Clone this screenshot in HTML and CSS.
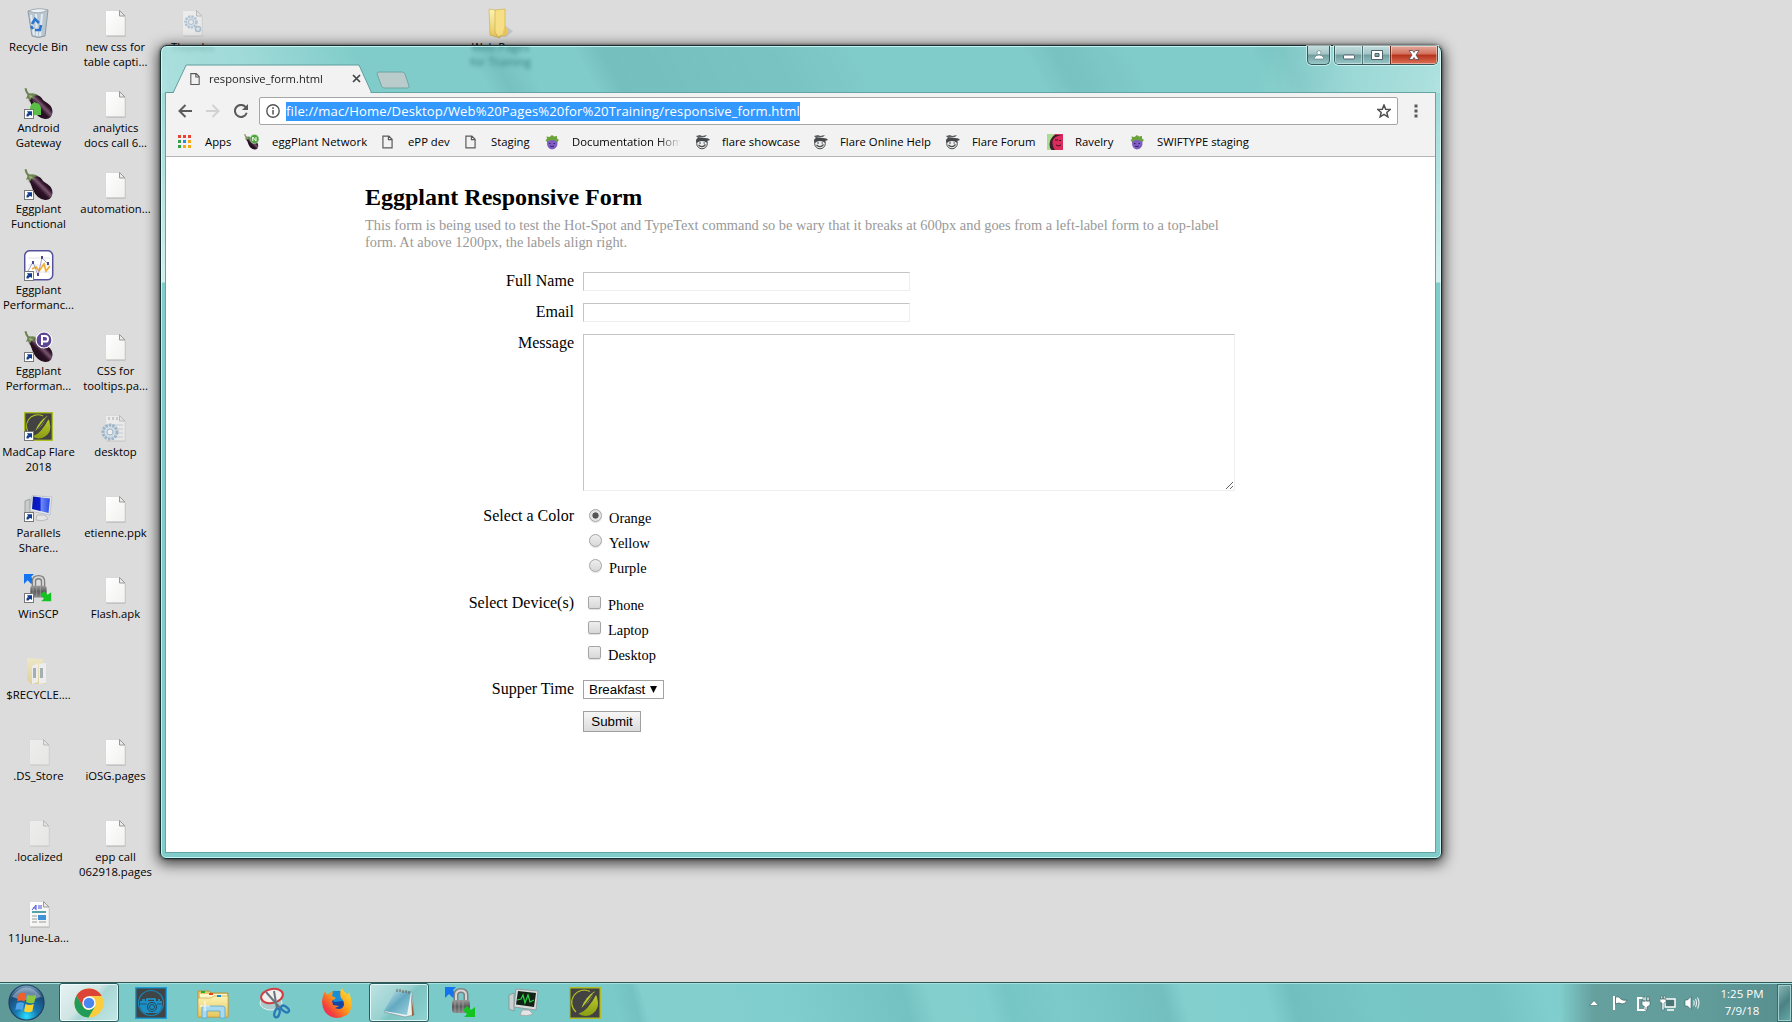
FILE: index.html
```
<!DOCTYPE html>
<html lang="en">
<head>
<meta charset="utf-8">
<title>responsive_form.html</title>
<link rel="stylesheet" href="styles.css">
</head>
<body>
<svg class="defs" width="0" height="0" aria-hidden="true">
  <defs>
    <linearGradient id="paper" x1="0" y1="0" x2="1" y2="1"><stop offset="0" stop-color="#fff"/><stop offset="1" stop-color="#f1f1ef"/></linearGradient>
    <linearGradient id="aub" x1="0" y1="1" x2="1" y2="0"><stop offset="0" stop-color="#12060f"/><stop offset=".45" stop-color="#2c1226"/><stop offset=".56" stop-color="#7a5570"/><stop offset=".66" stop-color="#2c1226"/><stop offset="1" stop-color="#12060f"/></linearGradient>
    <linearGradient id="leaf" x1="0" y1="0" x2="0" y2="1"><stop offset="0" stop-color="#b9cc2b"/><stop offset="1" stop-color="#8a9c12"/></linearGradient>
    <linearGradient id="fold" x1="0" y1="0" x2="0" y2="1"><stop offset="0" stop-color="#fdf3b4"/><stop offset="1" stop-color="#e6c65c"/></linearGradient>
    <linearGradient id="lock" x1="0" y1="0" x2="0" y2="1"><stop offset="0" stop-color="#9a9a9a"/><stop offset=".5" stop-color="#5b5b5b"/><stop offset="1" stop-color="#888"/></linearGradient>
    <linearGradient id="screen" x1="0" y1="0" x2="1" y2="0"><stop offset="0" stop-color="#0818a8"/><stop offset=".45" stop-color="#0a1cd8"/><stop offset=".5" stop-color="#6f8cf5"/><stop offset="1" stop-color="#2747e6"/></linearGradient>
    <radialGradient id="orb" cx=".5" cy=".9" r=".9"><stop offset="0" stop-color="#2be0ff"/><stop offset=".35" stop-color="#1878b0"/><stop offset=".75" stop-color="#1b4a78"/><stop offset="1" stop-color="#7fa6c4"/></radialGradient>
    <linearGradient id="fox" x1="1" y1="0" x2="0" y2="1"><stop offset="0" stop-color="#ffee3c"/><stop offset=".45" stop-color="#ff9a18"/><stop offset=".75" stop-color="#f4403c"/><stop offset="1" stop-color="#e31587"/></linearGradient>
    <linearGradient id="note" x1="0" y1="0" x2="1" y2="1"><stop offset="0" stop-color="#d5eef6"/><stop offset=".5" stop-color="#63a9c0"/><stop offset="1" stop-color="#9fd3e2"/></linearGradient>

    <symbol id="i-file" viewBox="0 0 32 32"><path d="M6.500 4.500H20.500L25.500 10V29.500H6.500Z" fill="#a9a9a9"/><path d="M5.500 3.500H19.500L25 9V28.500H5.500Z" fill="url(#paper)" stroke="#d4d4d4" stroke-width=".8"/><path d="M19.500 3.500V9H25Z" fill="#e9e9e9" stroke="#999"/></symbol>
    <symbol id="i-short" viewBox="0 0 32 32"><rect x=".5" y="21.500" width="9" height="9" fill="#fff" stroke="#777"/><path d="M2.500 28.500V27Q2.500 25 5 25H4L3 23.300H8V28L6.500 27Q4.500 27 4.500 28.500Z" fill="#123c8c"/></symbol>
    <symbol id="i-egg" viewBox="0 0 32 32"><path d="M4 9Q8 5 13 7Q17 8 19 12C22 15 28.500 16 28.500 24Q28 31.500 21 31Q13 30 9 21Q7 15 4 9Z" fill="url(#aub)"/><path d="M.5 .5L2.500 0Q3.500 5 6 5.500Q10 4.500 14 7L10 8L11 11L7.500 10L5 14L4.500 10L2 11L3.500 7Q1 4 .5 .5Z" fill="#6d8352"/><path d="M5 7L9 8L6 10Z" fill="#a5b67a"/></symbol>
    <symbol id="i-docs" viewBox="0 0 32 32"><use href="#i-file"/><g opacity=".9"><circle cx="14" cy="15" r="5.500" fill="#cfe1ef" stroke="#79a2c4" stroke-width="2.500" stroke-dasharray="2.200 1"/><circle cx="14" cy="15" r="2.500" fill="#f4f8fb" stroke="#6c96ba"/><circle cx="21" cy="22" r="2.500" fill="#dae8f1" stroke="#6c96ba" stroke-width="1.500"/></g></symbol>
    <symbol id="i-flare" viewBox="0 0 32 32"><rect x=".75" y=".75" width="30.500" height="30.500" fill="#424242" stroke="#aebf25" stroke-width="1.500"/><path d="M28.500 13A12.500 12.500 0 0 1 9 26.500Q15 25 19 20Q24 14 27 8Q28.500 10 28.500 13Z" fill="url(#leaf)"/><path d="M7 25A12.500 12.500 0 0 1 21 4.500" fill="none" stroke="#aebf25" stroke-width="1.200"/><path d="M26 4Q16 10 12.500 21Q20 17 26 4Z" fill="#bacb30"/><path d="M25 6L9 27" stroke="#424242" stroke-width="1.200"/></symbol>
    <symbol id="i-lock" viewBox="0 0 32 32"><path d="M0 0H11L8 3L11 8L8 11L4 7L0 11Z" fill="#1473ee"/><path d="M11 15V8Q11 3.500 16 3.500T21 8V15" fill="none" stroke="#808080" stroke-width="5"/><path d="M11 15V8Q11 3.500 16 3.500T21 8V15" fill="none" stroke="#d6d6d6" stroke-width="2"/><rect x="7" y="13" width="18" height="13" rx="3" fill="url(#lock)"/><path d="M10 14V26M14 14V26M18 14V26" stroke="#aaa" stroke-width=".7"/><path d="M30 30H19L22 27L18 23L22 19L26 23L30 20Z" fill="#13c31f"/></symbol>
    <symbol id="i-page" viewBox="0 0 12 15"><path d="M1 1H7.500L11 4.500V14H1ZM7 1V5H11" fill="none" stroke="#5a5a5a" stroke-width="1.300"/></symbol>
    <symbol id="i-purple" viewBox="0 0 16 16"><path d="M3 7Q8 4 13.500 7Q14 15 8 15.500Q2.500 15 3 7Z" fill="#7f5cc4"/><path d="M3 8L1.500 6L3 5L2.500 2.500L5.500 3L8 1L10 2.500L13 2L13 4.500L15 6L13 8L11 6.500L8 6L5 6.500Z" fill="#6ba23a"/><path d="M5 9.500H6.500M9.500 9.500H11M6 12Q8 13.500 10 12" stroke="#38246e" fill="none"/></symbol>
    <symbol id="i-face" viewBox="0 0 16 16"><circle cx="8" cy="9.500" r="5.300" fill="#eee" stroke="#484b4d"/><path d="M2.500 9Q1 5 4 4L11 4Q15 4 16 6L13 7L13.500 9Q8 5 2.500 9Z" fill="#44484a"/><path d="M2 2L6 1L8 2L13 1L11 3L4 4Z" fill="#5a5d5f"/><path d="M5 9H7M9.500 9H11M4.500 11Q8 14.500 11.500 10.500" stroke="#44484a" stroke-width="1.200" fill="none"/></symbol>
  </defs>
</svg>

<main class="desktop">
  <div class="item c1 r1"><svg class="ico bin" viewBox="0 0 32 32"><path d="M6 4L26 3L23 29Q16 32 10 29Z" fill="#b9c6d0" stroke="#8e9aa3"/><path d="M6 4Q16 0 26 3Q17 8 6 4Z" fill="#eef3f6" stroke="#a3adb4"/><path d="M9 8L12 28M14 7L15 29M20 7L18 29" stroke="#e4ecf2" stroke-width="2"/><path d="M10 17L13 12L17 16M19 18L18 23L13 23M11 22L9 19" fill="none" stroke="#2a76cf" stroke-width="2.600"/></svg><span>Recycle Bin</span></div>
  <div class="item c1 r2"><svg class="ico" viewBox="0 0 32 32"><use href="#i-egg"/><path d="M6 20Q7 15 10 15L9 13L12 15Q16 15 17 20V27H6Z" fill="#5bbf45"/><use href="#i-short"/></svg><span>Android<br>Gateway</span></div>
  <div class="item c1 r3"><svg class="ico" viewBox="0 0 32 32"><use href="#i-egg"/><use href="#i-short"/></svg><span>Eggplant<br>Functional</span></div>
  <div class="item c1 r4"><svg class="ico" viewBox="0 0 32 32"><rect x=".7" y=".7" width="28" height="29" rx="5" fill="#fff" stroke="#55509a" stroke-width="1.500"/><path d="M4 8H26M4 15H26M4 22H26" stroke="#e4e4ec"/><path d="M8 19L12 17L15 21L20 14L22 21L26 16" fill="none" stroke="#f3ae36" stroke-width="1.800"/><path d="M4 21L9 12L14 25L18 8L24 14" fill="none" stroke="#8b8abf" stroke-width=".8"/><path d="M8 11h2v3h-2zM13 23h2v3h-2zM17 6h2v3h-2zM23 12h2v3h-2z" fill="#4b4795"/><use href="#i-short"/></svg><span>Eggplant<br>Performanc...</span></div>
  <div class="item c1 r5"><svg class="ico" viewBox="0 0 32 32"><use href="#i-egg"/><circle cx="20" cy="9" r="8" fill="#5b4594" stroke="#fff" stroke-width="1.200"/><path d="M18 14V5H21Q24 5 24 8T21 10.500H18" fill="none" stroke="#fff" stroke-width="2"/><use href="#i-short"/></svg><span>Eggplant<br>Performan...</span></div>
  <div class="item c1 r6"><svg class="ico" viewBox="0 0 32 32"><use href="#i-flare" width="29" height="29"/><use href="#i-short" y="-2"/></svg><span>MadCap Flare<br>2018</span></div>
  <div class="item c1 r7"><svg class="ico" viewBox="0 0 32 32"><path d="M1 8L6 6V24L1 23Z" fill="#c9cdc9" stroke="#9fa39f"/><path d="M13 22H21L24 26Q19 29 12 27Z" fill="#e4e4e4" stroke="#bbb"/><path d="M8 2.500L28 4L26 22L6 18Z" fill="#e4e7ea" stroke="#b3b8bc" stroke-width=".7"/><path d="M9 3.500L26 5.500L24.500 20L8 16Z" fill="url(#screen)"/><use href="#i-short" y="-2"/></svg><span>Parallels<br>Share...</span></div>
  <div class="item c1 r8"><svg class="ico" viewBox="0 0 32 32"><use href="#i-lock" width="29" height="29"/><use href="#i-short" y="-2"/></svg><span>WinSCP</span></div>
  <div class="item c1 r9 faded"><svg class="ico" viewBox="0 0 32 32"><path d="M3 3L19 4V8L22 9V29H7L3 25Z" fill="url(#fold)"/><path d="M8 11L14 8V27L8 29ZM15 9L22 8V28L15 29Z" fill="#fff"/><path d="M9 13H12V23H9ZM16 13H19V23H16Z" fill="#69848b"/></svg><span>$RECYCLE....</span></div>
  <div class="item c1 r10 faded"><svg class="ico"><use href="#i-file"/></svg><span>.DS_Store</span></div>
  <div class="item c1 r11 faded"><svg class="ico"><use href="#i-file"/></svg><span>.localized</span></div>
  <div class="item c1 r12"><svg class="ico" viewBox="0 0 32 32"><use href="#i-file"/><path d="M8 12L12 7V12M9 10H12M14 8H18M14 10H18" stroke="#4a50df" fill="none"/><path d="M8 14H22" stroke="#17868c" stroke-width="1.500"/><path d="M8 18H13M8 21H13M8 24H13M15 24H22" stroke="#999"/><rect x="14" y="17" width="8" height="5" fill="#3f91d8"/></svg><span>11June-La...</span></div>

  <div class="item c2 r1"><svg class="ico"><use href="#i-file"/></svg><span>new css for<br>table capti...</span></div>
  <div class="item c2 r2"><svg class="ico"><use href="#i-file"/></svg><span>analytics<br>docs call 6...</span></div>
  <div class="item c2 r3"><svg class="ico"><use href="#i-file"/></svg><span>automation...</span></div>
  <div class="item c2 r5"><svg class="ico"><use href="#i-file"/></svg><span>CSS for<br>tooltips.pa...</span></div>
  <div class="item c2 r6 faded"><svg class="ico" viewBox="0 0 32 32"><use href="#i-file"/><path d="M9 5V8M13 5V8M17 5V8" stroke="#777"/><path d="M8 13H23M8 17H23M8 21H23M8 25H23" stroke="#a9bccb"/><circle cx="10" cy="20" r="7" fill="#c8dcec" stroke="#5f8fb8" stroke-width="3" stroke-dasharray="2.500 1"/><circle cx="10" cy="20" r="3" fill="#fff" stroke="#5f8fb8"/></svg><span>desktop</span></div>
  <div class="item c2 r7"><svg class="ico"><use href="#i-file"/></svg><span>etienne.ppk</span></div>
  <div class="item c2 r8"><svg class="ico"><use href="#i-file"/></svg><span>Flash.apk</span></div>
  <div class="item c2 r10"><svg class="ico"><use href="#i-file"/></svg><span>iOSG.pages</span></div>
  <div class="item c2 r11"><svg class="ico"><use href="#i-file"/></svg><span>epp call<br>062918.pages</span></div>
  <div class="item c3 r1 faded"><svg class="ico"><use href="#i-docs"/></svg><span>Thumbs</span></div>
  <div class="item c7 r1"><svg class="ico" viewBox="0 0 32 32"><path d="M19 18L28 24L21 30H9Z" fill="#999" opacity=".35"/><path d="M4 2L15 4V31L5 28Z" fill="url(#fold)" stroke="#cfa93c" stroke-width=".6"/><path d="M10 3L20 2V27L13 30L10 25Z" fill="#f6df84" stroke="#cfab42" stroke-width=".6"/><path d="M19 21H23V27L17 30Z" fill="#e9c75b"/></svg><span>Web Pages<br>for Training</span></div>
</main>

<section class="window">
  <header class="titlebar">
    <div class="tab">
      <svg class="tab-shape" viewBox="0 0 208 29" aria-hidden="true"><path d="M0 28.500H6.500L20 1H200L213 28.500" transform="scale(.96 1)" fill="#f2f2f2" stroke="#5d9c9b"/><path d="M7 29H203" stroke="#f2f2f2" stroke-width="2"/></svg>
      <svg class="tab-page"><use href="#i-page"/></svg>
      <span class="tab-name">responsive_form.html</span>
      <svg class="tab-close" viewBox="0 0 9 9"><path d="M1 1L8 8M8 1L1 8" stroke="#444" stroke-width="1.700"/></svg>
    </div>
    <svg class="newtab" viewBox="0 0 34 18"><path d="M3 1H26Q28 1 29 3L33 15Q33.500 17 31.500 17H8Q6.500 17 5.500 15L1 3Q.8 1 3 1Z" fill="#b9cbcb" stroke="#6fa3a2"/></svg>
    <div class="controls">
      <div class="ctl user"><svg viewBox="0 0 10 10" width="10" height="10"><circle cx="5" cy="2.700" r="2" fill="#fff" stroke="#58787a" stroke-width=".6"/><path d="M.5 9V7.500Q2 5 5 5T9.500 7.500V9Z" fill="#fff" stroke="#58787a" stroke-width=".6"/></svg></div>
      <div class="group">
        <div class="ctl min"><svg viewBox="0 0 12 10" width="12" height="10"><rect x=".5" y="5" width="11" height="4" rx=".5" fill="#fff" stroke="#51616a"/></svg></div>
        <div class="ctl max"><svg viewBox="0 0 12 10" width="12" height="10"><path d="M.5 .5H11.500V9.500H.5ZM4 3.500V6.500H8V3.500Z" fill="#fff" fill-rule="evenodd" stroke="#51616a"/></svg></div>
        <div class="ctl close"><svg viewBox="0 0 12 10" width="12" height="10"><path d="M1 .5H4.500L6 2.500L7.500 .5H11L8 5L11 9.500H7.500L6 7.500L4.500 9.500H1L4 5Z" fill="#fff" stroke="#5b4654" stroke-width=".8"/></svg></div>
      </div>
    </div>
  </header>

  <div class="client">
    <div class="toolbar">
      <svg class="nav" viewBox="0 0 14 14"><path d="M14 7H1.500M7.500 1L1.500 7L7.500 13" fill="none" stroke="#5a5a5a" stroke-width="2"/></svg>
      <svg class="nav" viewBox="0 0 14 14"><path d="M0 7H12.500M6.500 1L12.500 7L6.500 13" fill="none" stroke="#d2d2d2" stroke-width="2"/></svg>
      <svg class="nav" viewBox="0 0 14 14"><path d="M11.700 3.200A6 6 0 1 0 12.700 8.700" fill="none" stroke="#5a5a5a" stroke-width="2"/><path d="M14 0V6H8Z" fill="#5a5a5a"/></svg>
      <div class="omnibox">
        <svg class="info" viewBox="0 0 14 14"><circle cx="7" cy="7" r="6.200" fill="none" stroke="#555" stroke-width="1.400"/><path d="M7 6V10.500M7 3.300V5" stroke="#555" stroke-width="1.500"/></svg>
        <span class="url">file://mac/Home/Desktop/Web%20Pages%20for%20Training/responsive_form.html</span>
        <svg class="star" viewBox="0 0 14 14"><path d="M7 1L8.700 5.200L13.200 5.500L9.800 8.400L10.900 12.900L7 10.400L3.100 12.900L4.200 8.400L.8 5.500L5.300 5.200Z" fill="none" stroke="#505050" stroke-width="1.500"/></svg>
      </div>
      <svg class="dots" viewBox="0 0 4 14"><path d="M.5 .5h3v3h-3zM.5 5.500h3v3h-3zM.5 10.500h3v3h-3z" fill="#5a5a5a"/></svg>
    </div>
    <nav class="bookmarks">
      <div><svg viewBox="0 0 16 16"><path d="M1 1h3v3h-3zM6 1h3v3h-3zM11 1h3v3h-3z" fill="#ea4335"/><path d="M1 6h3v3h-3z" fill="#34a048"/><path d="M6 6h3v3h-3z" fill="#2d86e8"/><path d="M11 6h3v3h-3zM6 11h3v3h-3zM11 11h3v3h-3z" fill="#f5ab10"/><path d="M1 11h3v3h-3z" fill="#34a048"/></svg><span>Apps</span></div>
      <div><svg viewBox="0 0 32 32"><use href="#i-egg"/><circle cx="21" cy="10" r="9" fill="#4aa43b" stroke="#dceedd"/><path d="M17.500 14V6L24 14V6" fill="none" stroke="#fff" stroke-width="2"/></svg><span class="wide">eggPlant Network</span></div>
      <div class="plain"><svg><use href="#i-page"/></svg><span>ePP dev</span></div>
      <div class="plain"><svg><use href="#i-page"/></svg><span>Staging</span></div>
      <div class="docs"><svg><use href="#i-purple"/></svg><span class="cut">Documentation Home</span></div>
      <div><svg><use href="#i-face"/></svg><span>flare showcase</span></div>
      <div><svg><use href="#i-face"/></svg><span>Flare Online Help</span></div>
      <div><svg><use href="#i-face"/></svg><span>Flare Forum</span></div>
      <div><svg viewBox="0 0 16 16"><rect width="16" height="16" fill="#dd2a5c"/><path d="M0 0H8Q3 4 4 16H0Z" fill="#a8dd92"/><path d="M3 14Q1 5 8 1H15Q7 2 5.500 7Q5 12 8 16H5Z" fill="#33222b"/><path d="M8 6H11M12 6.500H14M9 11Q11 13 14 11" stroke="#3a1524" fill="none"/></svg><span>Ravelry</span></div>
      <div class="docs"><svg><use href="#i-purple"/></svg><span>SWIFTYPE staging</span></div>
    </nav>

    <article class="page">
      <div class="content">
        <h1>Eggplant Responsive Form</h1>
        <p>This form is being used to test the Hot-Spot and TypeText command so be wary that it breaks at 600px and goes from a left-label form to a top-label form. At above 1200px, the labels align right.</p>
        <form>
          <label class="name" for="full">Full Name</label><input class="field" id="full" type="text">
          <label class="name" for="mail">Email</label><input class="field" id="mail" type="text">
          <label class="name" for="msg">Message</label><textarea id="msg"></textarea>
          <span class="name group-name">Select a Color</span>
          <div class="options radios">
            <label><input type="radio" name="color" checked>Orange</label>
            <label><input type="radio" name="color">Yellow</label>
            <label><input type="radio" name="color">Purple</label>
          </div>
          <span class="name group-name">Select Device(s)</span>
          <div class="options checks">
            <label><input type="checkbox">Phone</label>
            <label><input type="checkbox">Laptop</label>
            <label><input type="checkbox">Desktop</label>
          </div>
          <span class="name">Supper Time</span>
          <div class="select"><span>Breakfast</span><svg viewBox="0 0 7 7"><path d="M0 0H7L3.500 7Z"/></svg></div>
          <button type="button">Submit</button>
        </form>
      </div>
    </article>
  </div>
</section>

<footer class="taskbar">
  <div class="start"><svg viewBox="0 0 38 38"><circle cx="19" cy="19" r="18" fill="url(#orb)" stroke="#1d4060" stroke-width="1.200"/><path d="M4 13Q19 -6 34 13Q19 20 4 13Z" fill="#fff" opacity=".35"/><path d="M11 10Q15 8 18.500 10L17 18Q13 16 9.500 18Z" fill="#f0602a"/><path d="M20 11Q24 13 29 11L27 19Q23 21 18.500 18.500Z" fill="#8dc63f"/><path d="M9 19.500Q13 18 16.500 19.500L15 27Q11 25 7.500 27Z" fill="#4fa3ea"/><path d="M18 20.500Q22 22.500 26.500 20.500L25 28Q21 30 16.500 28Z" fill="#fcd22f"/></svg></div>
  <div class="task active"><svg viewBox="0 0 32 32"><circle cx="16" cy="16" r="14.500" fill="#fbcc3b"/><path d="M16 9H28.700A14.500 14.500 0 0 0 3.400 8.700L10 20L16 16Z" fill="#dc4437"/><path d="M3.400 8.700A14.500 14.500 0 0 0 15.500 30.500L22 19.500L16 23Q12 23 10 19.500Z" fill="#1f9d58"/><circle cx="16" cy="16" r="6.700" fill="#fff"/><circle cx="16" cy="16" r="5.300" fill="#4a86f0"/></svg></div>
  <div class="task"><svg viewBox="0 0 32 32"><rect x=".7" y=".7" width="30.600" height="30.600" fill="#3f4446" stroke="#1c9fd8" stroke-width="1.400"/><circle cx="16" cy="16" r="12.500" fill="none" stroke="#1786b8" stroke-width="1.200"/><path d="M5 14H27V20Q25 25 22 26H10Q7 25 5 20Z" fill="#1c8fc6"/><path d="M12 14V12H20V14M7 13H10M23 13H25" stroke="#1c9fd8" stroke-width="1.600" fill="none"/><circle cx="17" cy="20" r="4.500" fill="#1c8fc6" stroke="#224d60" stroke-width="1.200"/><circle cx="17" cy="20" r="2.500" fill="none" stroke="#224d60"/><path d="M5 17H12M22 17H27" stroke="#224d60" stroke-width=".8"/></svg></div>
  <div class="task"><svg viewBox="0 0 32 32"><path d="M1 4H12L14 6H31V30H1Z" fill="#e8c868" stroke="#b9963d"/><path d="M3 7H30V28H3Z" fill="#fff6c9"/><path d="M1 11H14L17 9H31V30H1Z" fill="url(#fold)" stroke="#c6a348" stroke-width=".7"/><path d="M4 4H8V6H4Z" fill="#29ab35"/><path d="M12 6H16V8H12Z" fill="#dc4726"/><path d="M20 8H24V10H20Z" fill="#1688d8"/><path d="M5 31V21Q5 19 7 19H25Q28 19 28 21V31H23V24H10V31Z" fill="#a7d9ef" stroke="#5ea6ca" stroke-width=".8"/><path d="M8 14V24M3 19H13" stroke="#fff"/></svg></div>
  <div class="task"><svg viewBox="0 0 32 32"><ellipse cx="12" cy="16" rx="11" ry="7" fill="#a8cbcc" stroke="#e6f0f0"/><ellipse cx="13" cy="9" rx="11" ry="7" transform="rotate(-12 13 9)" fill="#f3efef" stroke="#cf3f42" stroke-width="2"/><path d="M7 5L22 22M15 4L18 22" stroke="#68757b" stroke-width="2"/><ellipse cx="18" cy="26" rx="2.500" ry="4.500" fill="none" stroke="#2979b6" stroke-width="2.300" transform="rotate(15 18 26)"/><ellipse cx="26" cy="22" rx="4.500" ry="2.500" fill="none" stroke="#2979b6" stroke-width="2.300" transform="rotate(35 26 22)"/></svg></div>
  <div class="task"><svg viewBox="0 0 32 32"><circle cx="16" cy="16" r="12" fill="#1746a8"/><path d="M9 6Q15 1 22 7L22 14L13 15Z" fill="#198ed8"/><path d="M21 1Q22 4 27 8L28 5Q34 21 26 28Q13 35 4 25Q-2 15 4 4L6 8L12 4L11 9L15 11L11 14L12 18L18 19Q14 21 14 21Q21 24 23 18Q23 13 20 11Q18 5 21 1Z" fill="url(#fox)"/></svg></div>
  <div class="task open"><svg viewBox="0 0 32 32"><path d="M14 5L29 5L31 28L22 30L1 25Z" fill="#eaf1ef" stroke="#78969b" stroke-width=".7"/><path d="M13 3L28 5L24 28L1 24Z" fill="url(#note)"/><path d="M14 2V5M17 2V5M20 3V6M23 3V6M26 4V7" stroke="#735e4a"/><path d="M28 6L31 28L29 29Z" fill="#99603c"/></svg></div>
  <div class="task"><svg><use href="#i-lock"/></svg></div>
  <div class="task"><svg viewBox="0 0 32 32"><path d="M2 8L7 6V24L2 22Z" fill="#ccd0cf" stroke="#888" stroke-width=".7"/><path d="M15 23H22L26 27Q20 30 13 28Z" fill="#e4e4e4" stroke="#999" stroke-width=".7"/><path d="M9 2L31 4L29 23L7 20Z" fill="#d9dcdc" stroke="#888" stroke-width=".7"/><path d="M11 4L29 6L27 20L9 17.500Z" fill="#102214"/><path d="M10 13L14 12L16 8L18 16L21 8L23 15L27 13" fill="none" stroke="#25d644" stroke-width="1.200"/></svg></div>
  <div class="task"><svg><use href="#i-flare"/></svg></div>
  <div class="tray">
    <svg class="t-arrow" viewBox="0 0 10 6"><path d="M.5 5.500L5 .5L9.500 5.500Z" fill="#fff" stroke="#3d6a6a" stroke-width=".6"/></svg>
    <svg class="t-ico" viewBox="0 0 16 16"><path d="M2 1V15" stroke="#fff" stroke-width="2"/><path d="M3.500 2Q7 1 9 4Q11 6 15 5Q14 9 10 9Q7 7 3.500 9Z" fill="#fff" stroke="#365b5c" stroke-width=".7"/></svg>
    <svg class="t-ico" viewBox="0 0 16 16"><path d="M2 3H9V15H2Z" fill="none" stroke="#fff" stroke-width="2"/><path d="M6 6H14V10L11 12V15H9V12L6 10ZM7 2H9V6H7ZM11 2H13V6H11Z" fill="#fff" stroke="#365b5c" stroke-width=".6"/></svg>
    <svg class="t-ico" viewBox="0 0 16 16"><path d="M5 4H15V12H5ZM7 15H14" fill="#4a7575" stroke="#fff" stroke-width="1.500"/><path d="M0 4H6V7L4 8V15H2V8L0 7ZM1 1H2.500V4H1ZM3.800 1H5.300V4H3.800Z" fill="#fff" stroke="#365b5c" stroke-width=".5"/></svg>
    <svg class="t-ico" viewBox="0 0 16 16"><path d="M1 5H3.500L7 1.500V14.500L3.500 11H1Z" fill="#fff" stroke="#365b5c" stroke-width=".6"/><path d="M9.500 5.500Q11 8 9.500 10.500M11.500 4Q13.500 8 11.500 12M13.500 2.500Q16.500 8 13.500 13.500" fill="none" stroke="#e8f3f3" stroke-width="1.100"/></svg>
    <div class="clock">1:25 PM<br>7/9/18</div>
    <div class="peek"></div>
  </div>
</footer>
</body>
</html>
```
FILE: styles.css
```
* { box-sizing: border-box; }
body {
  margin: 0;
  width: 1792px;
  height: 1022px;
  overflow: hidden;
  position: relative;
  background: #dcdcdc;
  font-family: "Open Sans", "Noto Sans", sans-serif;
  color: #000;
}
svg { display: block; flex: none; }
.defs { position: absolute; }

/* desktop icons */
.desktop {
  display: grid;
  grid-template-columns: repeat(7, 77px);
  grid-template-rows: repeat(12, 81px);
}
.item {
  display: flex;
  flex-direction: column;
  align-items: center;
  padding-top: 7px;
  font-size: 11.3px;
  line-height: 15px;
  text-align: center;
  white-space: nowrap;
}
.ico { width: 32px; height: 32px; }
.c1 .ico { margin-left: 2px; }
.c1 .bin { margin-left: -1px; }
.faded .ico { opacity: .5; }
.c1 { grid-column: 1; } .c2 { grid-column: 2; } .c3 { grid-column: 3; } .c7 { grid-column: 7; }
.r1 { grid-row: 1; } .r2 { grid-row: 2; } .r3 { grid-row: 3; } .r4 { grid-row: 4; }
.r5 { grid-row: 5; } .r6 { grid-row: 6; } .r7 { grid-row: 7; } .r8 { grid-row: 8; }
.r9 { grid-row: 9; } .r10 { grid-row: 10; } .r11 { grid-row: 11; } .r12 { grid-row: 12; }

/* browser window */
.window {
  position: absolute;
  left: 160px;
  top: 45px;
  width: 1282px;
  height: 814px;
  padding: 0 5px 5px 4px;
  border: 1px solid #16302f;
  border-radius: 7px 7px 6px 6px;
  background:
    linear-gradient(180deg, rgba(160,220,218,.5) 0, rgba(225,245,244,.85) 236px, transparent 237px) 0 0 / 6px 100% no-repeat,
    linear-gradient(180deg, rgba(160,220,218,.5) 0, rgba(225,245,244,.85) 236px, transparent 237px) 100% 0 / 6px 100% no-repeat,
    linear-gradient(62deg, rgba(205,238,236,.55) 0, rgba(205,238,236,.4) 90px, transparent 190px) 0 0 / 100% 47px no-repeat,
    linear-gradient(-75deg, rgba(205,238,236,.6) 0, rgba(205,238,236,.35) 90px, transparent 180px) 0 0 / 100% 47px no-repeat,
    linear-gradient(62deg, transparent 290px, rgba(80,150,150,.2) 310px, transparent 340px, transparent 385px, rgba(80,150,150,.25) 410px, rgba(80,150,150,.15) 560px, transparent 640px, transparent 780px, rgba(80,150,150,.18) 810px, transparent 880px, transparent 980px, rgba(80,150,150,.15) 1010px, transparent 1060px) 0 0 / 100% 47px no-repeat,
    rgba(77,195,193,.64);
  backdrop-filter: blur(2px);
  box-shadow: inset 0 0 0 1px rgba(225,255,255,.75), 0 0 3px rgba(0,0,0,.65), 0 3px 14px 2px rgba(0,0,0,.7);
}
.titlebar {
  display: flex;
  height: 46px;
  padding-top: 18px;
}
.tab {
  position: relative;
  display: flex;
  align-items: center;
  width: 208px;
  margin-left: 2px;
  padding: 0 0 0 23px;
  height: 29px;
}
.tab-shape { position: absolute; left: 0; top: 0; width: 208px; height: 29px; }
.tab-page, .tab-name, .tab-close { position: relative; }
.tab-page { width: 10px; height: 14px; }
.tab-name { flex: 1; margin-left: 9px; font-size: 11.2px; white-space: nowrap; color: #222; }
.tab-close { width: 9px; height: 9px; margin-right: 14px; }
.newtab { width: 34px; height: 18px; margin: 7px 0 0 1px; }
.controls { display: flex; gap: 4px; margin: -18px -2px 0 auto; height: 19px; }
.group { display: flex; border: 1px solid #35585a; border-top: 0; border-radius: 0 0 5px 5px; overflow: hidden; box-shadow: 0 0 0 1px rgba(235,255,255,.6); }
.ctl {
  display: flex;
  align-items: center;
  justify-content: center;
  height: 18px;
  background: linear-gradient(#c5dddd, #a2c4c5 45%, #6f9b9c 50%, #9ac9c9);
  box-shadow: inset 0 0 0 1px rgba(255,255,255,.4);
}
.user { width: 23px; height: 19px; border: 1px solid #35585a; border-top: 0; border-radius: 0 0 5px 5px; box-shadow: 0 0 0 1px rgba(235,255,255,.6); }
.min { width: 28px; border-right: 1px solid #4f7476; }
.max { width: 27px; }
.close { width: 47px; border-left: 1px solid #6b2b22; background: linear-gradient(#e3a99c, #d3705c 45%, #b5321a 50%, #dc7155); }

.client {
  height: 761px;
  border: 1px solid #64a5a4;
  background: #fff;
}
.toolbar {
  display: flex;
  align-items: center;
  height: 36px;
  padding: 0 16px 0 12px;
  background: #f2f2f2;
}
.nav { width: 14px; height: 14px; margin-right: 14px; }
.nav:nth-child(3) { margin-right: 11px; }
.omnibox {
  display: flex;
  align-items: center;
  width: 1139px;
  height: 28px;
  padding: 0 6px;
  background: #fff;
  border: 1px solid #a6a6a6;
  border-radius: 2px;
}
.info { width: 14px; height: 14px; margin-right: 6px; }
.url {
  width: 514px;
  height: 19px;
  background: #3399ff;
  color: #fff;
  font-size: 13.100px;
  letter-spacing: .12px;
  line-height: 19px;
  white-space: nowrap;
}
.star { width: 14px; height: 14px; margin-left: auto; }
.dots { width: 4px; height: 14px; margin-left: 16px; }
.bookmarks {
  display: grid;
  grid-template-columns: 67px 138px 83px 81px 148px 118px 132px 103px 84px 140px;
  height: 28px;
  padding: 0 0 2px 11px;
  align-items: center;
  background: #f2f2f2;
  border-bottom: 1px solid #b5b5b5;
  font-size: 11.3px;
}
.bookmarks > div { display: flex; align-items: center; white-space: nowrap; }
.bookmarks svg { width: 16px; height: 16px; margin-right: 12px; }
.bookmarks .plain svg { width: 11px; height: 14px; margin-right: 15px; }
.bookmarks .docs { margin-left: -2px; }
.wide { letter-spacing: .12px; }
.cut { width: 109px; overflow: hidden; -webkit-mask-image: linear-gradient(90deg, #000 85px, transparent 109px); mask-image: linear-gradient(90deg, #000 85px, transparent 109px); }

/* page */
.page { font-family: "Liberation Serif", "Times New Roman", serif; }
.content { width: 870px; margin-left: 199px; padding-top: 27px; }
h1 { margin: 0; font-size: 24px; line-height: 27px; }
p { margin: 6px 0 21px; font-size: 14.4px; line-height: 17px; color: #999; }
form {
  display: grid;
  grid-template-columns: 209px 1fr;
  column-gap: 9px;
  row-gap: 12px;
  align-items: start;
  justify-items: start;
}
.name { justify-self: end; font-size: 16px; line-height: 18px; }
.field, textarea {
  height: 19px;
  width: 327px;
  margin: 0;
  border: 1px solid #eee;
  border-top-color: #c4c4c4;
  border-left-color: #c4c4c4;
  outline: 0;
  background: #fff;
}
textarea { width: 652px; height: 157px; resize: both; display: block; }
.group-name { margin-top: 4px; }
.options { font-size: 14.4px; width: 200px; }
.radios { margin-top: 1px; margin-bottom: -1px; }
.checks { margin-top: 1px; margin-bottom: 2px; }
.options label { display: flex; align-items: center; height: 25px; padding-top: 3px; }
.options input {
  appearance: none;
  width: 13px;
  height: 13px;
  margin: -5px 7px 0 5px;
  border: 1px solid #a5a5a5;
  border-radius: 2px;
  background: linear-gradient(#eee, #d8d8d8);
  box-shadow: 0 1px 1px rgba(0,0,0,.12);
}
.radios input { border-radius: 50%; margin-left: 6px; }
.radios input:checked { background: radial-gradient(circle, #555 0 2.800px, #e4e4e4 3.400px); }
.select {
  display: flex;
  align-items: center;
  justify-content: space-between;
  width: 81px;
  height: 19px;
  padding: 0 6px 0 5px;
  border: 1px solid #a3a3a3;
  font: 13.333px/17px "Liberation Sans", Arial, sans-serif;
}
.select svg { width: 7px; height: 7px; }
button {
  grid-column: 2;
  width: 58px;
  height: 21px;
  padding: 0;
  border: 1px solid #a0a0a0;
  background: linear-gradient(#f6f6f6, #dcdcdc);
  font: 13.333px "Liberation Sans", Arial, sans-serif;
  color: #000;
}

/* taskbar */
.taskbar {
  position: absolute;
  left: 0;
  top: 982px;
  display: flex;
  width: 1792px;
  height: 40px;
  border-top: 1px solid #2f5a5a;
  box-shadow: inset 0 1px #a8e0df;
  background:
    linear-gradient(90deg, #5f9998 0, #5f9998 58px, transparent 66px),
    linear-gradient(75deg, #7acac9 600px, #74c2c2 618px, #83cfce 628px, #80cecd 760px, #74c2c1 880px, #83cfce 905px, #80cecd 960px, #76c6c5 980px, #7ccbca 1030px, #73bfbf 1130px, #82cfce 1150px, #80cecd 1230px, #72bfbf 1255px, #77c7c6 1330px, #76c5c4 1450px, #80cecd 1500px, #7ccbca 1560px);
}
.start { width: 58px; padding: 1px 0 0 8px; }
.start svg { width: 37px; height: 37px; }
.task { display: flex; align-items: center; justify-content: center; width: 62px; height: 39px; }
.task svg { width: 32px; height: 32px; }
.active, .open {
  width: 60px;
  margin: 0 1px;
  border: 1px solid #2c5c5c;
  border-radius: 3px;
  box-shadow: inset 0 0 0 1px rgba(240,255,255,.8);
  background: linear-gradient(135deg, #e8f2f2 0, #cfe4e4 45%, #a9d7d6 55%, #c2e6e5);
}
.open { background: linear-gradient(135deg, #bfe3e2 0, #99d2d1 45%, #7dc4c3 55%, #8fd2d1); }
.tray {
  display: flex;
  align-items: center;
  margin-left: auto;
  width: 232px;
  height: 38px;
  padding-left: 29px;
  margin-top: 1px;
  background: linear-gradient(90deg, transparent, #659f9e 34px, #619b9a 150px, #568d8e);
}
.t-arrow { width: 10px; height: 6px; margin-right: 13px; }
.t-ico { width: 16px; height: 16px; margin-right: 8px; }
.clock { width: 70px; margin-left: -1px; color: #fff; font-size: 11.5px; line-height: 17px; margin-top: -2px; text-align: center; }
.peek { width: 15px; height: 38px; margin-left: auto; border: 1px solid #3a6b6b; box-shadow: inset 0 0 0 1px #a0cccb; background: linear-gradient(135deg, #8ab9b8, #4b8283 50%, #66a9a9); }
```
